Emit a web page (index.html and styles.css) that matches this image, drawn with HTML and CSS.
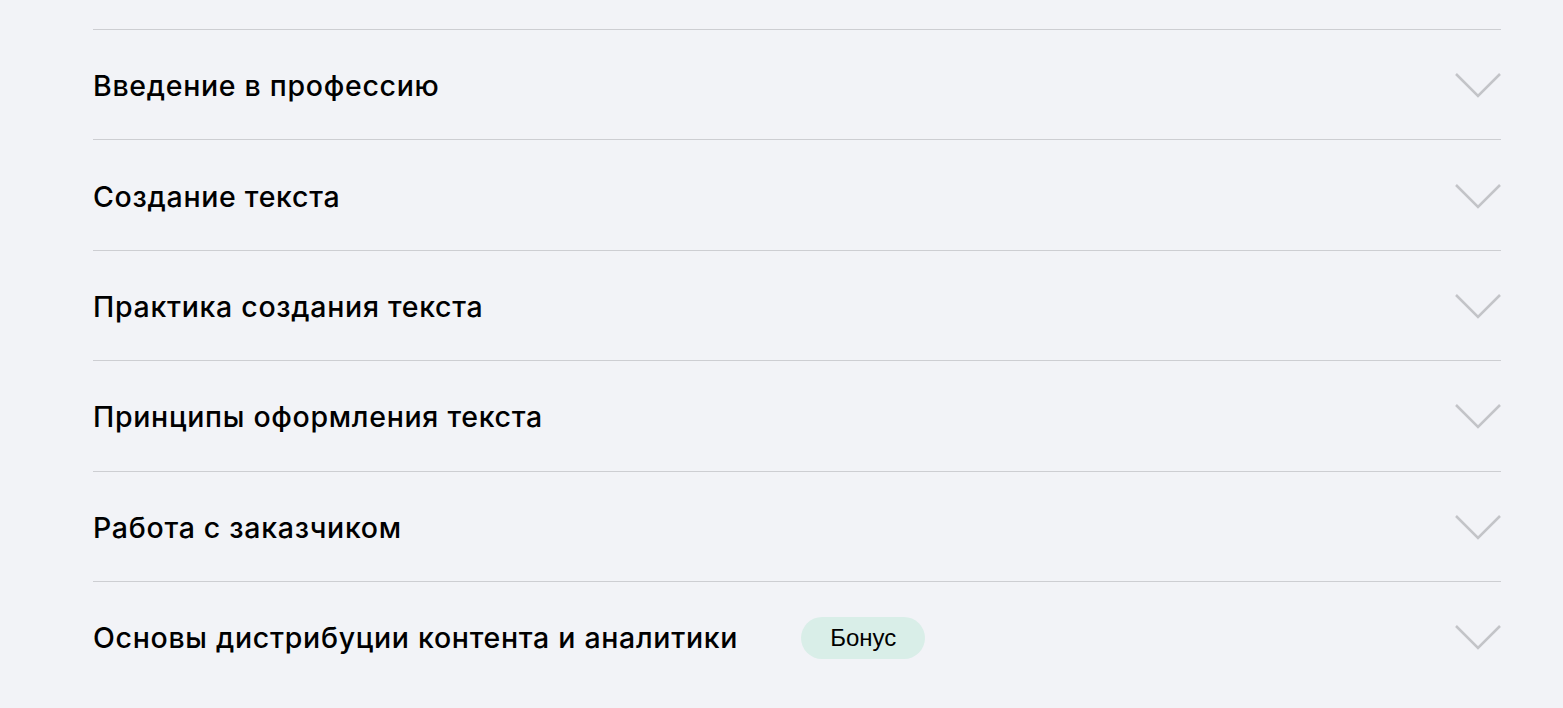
FILE: index.html
```html
<!DOCTYPE html>
<html lang="ru">
<head>
    <meta charset="UTF-8">
    <meta name="viewport" content="width=device-width, initial-scale=1.0">
    <title>Программа курса</title>
    <link rel="stylesheet" href="styles.css">
</head>
<body>
    <div class="program">
        <div class="module">
            <div class="module-title">Введение в профессию</div>
            <svg class="chevron" viewBox="0 0 46 25"><path d="M1 1 L23 23 L45 1"/></svg>
        </div>
        <div class="module">
            <div class="module-title">Создание текста</div>
            <svg class="chevron" viewBox="0 0 46 25"><path d="M1 1 L23 23 L45 1"/></svg>
        </div>
        <div class="module">
            <div class="module-title">Практика создания текста</div>
            <svg class="chevron" viewBox="0 0 46 25"><path d="M1 1 L23 23 L45 1"/></svg>
        </div>
        <div class="module">
            <div class="module-title">Принципы оформления текста</div>
            <svg class="chevron" viewBox="0 0 46 25"><path d="M1 1 L23 23 L45 1"/></svg>
        </div>
        <div class="module">
            <div class="module-title">Работа с заказчиком</div>
            <svg class="chevron" viewBox="0 0 46 25"><path d="M1 1 L23 23 L45 1"/></svg>
        </div>
        <div class="module">
            <div class="module-title">Основы дистрибуции контента и аналитики</div>
            <span class="badge">Бонус</span>
            <svg class="chevron" viewBox="0 0 46 25"><path d="M1 1 L23 23 L45 1"/></svg>
        </div>
    </div>
</body>
</html>
```

FILE: styles.css
```css
body {
    font-family: 'Inter', 'Liberation Sans', sans-serif;
    margin: 0;
    background-color: #f2f3f7;
    color: #000;
}
.program {
    margin: 0 62px 0 93px;
    padding-top: 29px;
}
.module {
    display: flex;
    align-items: center;
    height: 107.4px;
    padding-top: 2px;
    border-top: 1px solid #cdced2;
}
.module-title {
    font-size: 28.5px;
    font-weight: 500;
    letter-spacing: 0.7px;
}
.badge {
    margin-left: 63px;
    padding: 0 29px;
    height: 42px;
    line-height: 42px;
    border-radius: 21px;
    background-color: #d9eee8;
    font-family: 'Liberation Sans', sans-serif;
    font-size: 24px;
}
.chevron {
    margin-left: auto;
    width: 46px;
    height: 25px;
    fill: none;
    stroke: #c3c4c8;
    stroke-width: 2.5;
}
```
